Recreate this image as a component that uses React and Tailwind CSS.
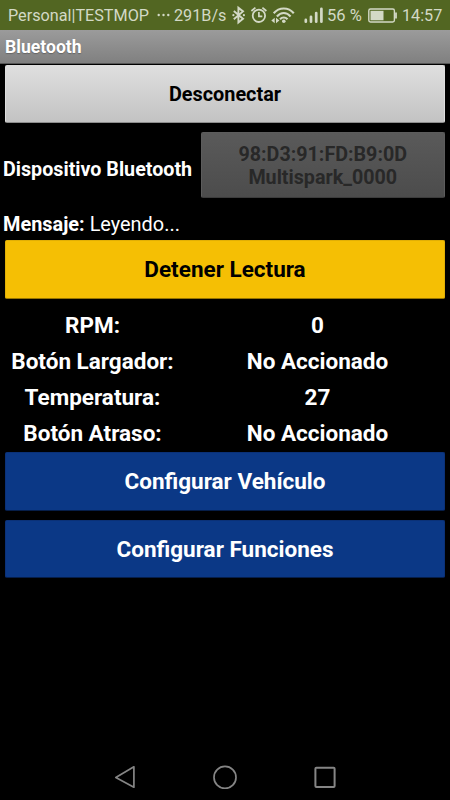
const READINGS = [
  ['RPM:', '0'],
  ['Botón Largador:', 'No Accionado'],
  ['Temperatura:', '27'],
  ['Botón Atraso:', 'No Accionado'],
];

function StatusBar() {
  return (
    <header className="flex h-[30px] items-center bg-[#526622] pl-2 text-[16.2px] leading-[30px] whitespace-nowrap text-[#d3d9c6]">
      <span className="w-[149px] shrink-0 pt-0.5">Personal|TESTMOP</span>
      <svg className="mr-[4px] h-[30px] w-[13px] shrink-0" viewBox="0 0 13 30" fill="currentColor">
        <circle cx="1.7" cy="15" r="1.2" />
        <circle cx="6.5" cy="15" r="1.2" />
        <circle cx="11.3" cy="15" r="1.2" />
      </svg>
      <span className="w-[57px] shrink-0 pt-0.5">291B/s</span>
      <svg className="h-[30px] w-[96px] shrink-0" viewBox="231 0 96 30" fill="none" stroke="currentColor">
        <path d="M233.8 11l9.2 7.8-4.6 3.7V7.8l4.6 3.6-9.2 7.8" strokeWidth="1.9" />
        <circle cx="233.4" cy="15.2" r="1.1" fill="currentColor" stroke="none" />
        <circle cx="243.9" cy="15.2" r="1.1" fill="currentColor" stroke="none" />
        <circle cx="258.9" cy="15.8" r="6.2" strokeWidth="1.8" />
        <path d="M251.4 11l4-3.4M266.4 11l-4-3.4M258.9 12v4.3h3.4" strokeWidth="1.7" />
        <path d="M273.7 13.3c5.4-6.4 14.7-6.4 20.1 0M276.9 16.5c4-4.6 9.7-4.6 13.7 0M280 19.3c2.2-2.4 5.3-2.4 7.5 0" strokeWidth="2.1" />
        <circle cx="283.8" cy="21.2" r="1.8" fill="currentColor" stroke="none" />
        <path d="M274.7 17.8v5.4l-3.4-2.7zM276 17.8v5.4l3.4-2.7z" fill="currentColor" stroke="none" />
        <path d="M305.8 19.9v1.8M311 16.8v4.9M316.2 13v8.7M321.4 8.8v12.9" strokeWidth="2.7" strokeLinecap="round" />
      </svg>
      <span className="w-[41px] shrink-0 pt-0.5 text-[16.5px]">56 %</span>
      <svg className="mr-[4px] h-[30px] w-[30px] shrink-0" viewBox="368 0 30 30" fill="none" stroke="currentColor">
        <rect x="368.8" y="9" width="25.6" height="13" rx="1.7" strokeWidth="1.4" />
        <path d="M370.5 10.8h13v9.5h-13z" fill="currentColor" stroke="none" />
        <path d="M396 12.5v6" strokeWidth="1.8" />
      </svg>
      <span className="pt-0.5 text-[16.2px]">14:57</span>
    </header>
  );
}

function ActionButton({ children, className }) {
  return (
    <button className={`block w-full rounded-[2px] border font-bold ${className}`}>
      {children}
    </button>
  );
}

export default function App() {
  return (
    <div className="flex h-[800px] w-[450px] flex-col overflow-hidden bg-black font-[Roboto,sans-serif] text-white">
      <StatusBar />
      <h1 className="h-[34px] shrink-0 border-b border-[#565656] bg-linear-to-b from-[#9b9b9b] to-[#808080] pl-[5px] text-[17.6px] leading-[35px] font-bold [text-shadow:0_1px_1px_#666]">
        Bluetooth
      </h1>

      <main className="flex flex-col px-[5px] pt-px">
        <ActionButton className="h-[58px] border-[#dedede] border-b-[#8d8d8d] bg-linear-to-b from-[#dfdfdf] to-[#c3c3c3] pt-[2px] text-[19.85px] text-black">
          Desconectar
        </ActionButton>

        <section className="mt-[9px] flex h-[66px] items-center justify-between">
          <h2 className="-ml-[2px] pt-[10px] text-[19.7px] font-bold whitespace-nowrap">Dispositivo Bluetooth</h2>
          <button disabled className="h-[66px] w-[244.5px] shrink-0 rounded-[2px] border border-[#5c5c5c] border-b-[#3c3c3c] bg-linear-to-b from-[#5a5a5a] to-[#4c4c4c] pt-[2px] text-[19.7px] leading-[23px] font-bold text-[#282828]">
            98:D3:91:FD:B9:0D<br />Multispark_0000
          </button>
        </section>

        <p className="mt-[10px] -ml-[2px] h-[32px] text-[19.9px] leading-[33px]"><b>Mensaje:</b> Leyendo...</p>

        <ActionButton className="h-[59px] border-[#e1af05] border-b-[#987500] bg-[#f5bf04] pt-px text-[22.5px] text-black">
          Detener Lectura
        </ActionButton>

        <dl className="mt-[8px] mb-px text-center text-[22.5px] leading-9 font-bold">
          {READINGS.map(([label, value]) => (
            <div key={label} className="flex h-9">
              <dt className="w-[175px] shrink-0">{label}</dt>
              <dd className="w-[275px] shrink-0">{value}</dd>
            </div>
          ))}
        </dl>

        <div className="flex flex-col gap-[9px]">
          <ActionButton className="h-[58.5px] border-[#0b3177] border-b-[#061e49] bg-[#0b3886] pt-[2px] text-[22.5px]">
            Configurar Vehículo
          </ActionButton>
          <ActionButton className="h-[58.5px] border-[#0b3177] border-b-[#061e49] bg-[#0b3886] pt-[2px] text-[22.5px]">
            Configurar Funciones
          </ActionButton>
        </div>
      </main>

      <nav className="mt-auto flex h-[35px] justify-center gap-[76px]">
        <svg className="size-6" viewBox="0 0 24 24" fill="none" stroke="#858585" strokeWidth="1.7" strokeLinejoin="round">
          <path d="M20.9 1.8v20.4L2.8 12.4z" />
        </svg>
        <svg className="size-6" viewBox="0 0 24 24" fill="none" stroke="#858585" strokeWidth="1.7">
          <circle cx="12" cy="12.4" r="11" />
        </svg>
        <svg className="size-6" viewBox="0 0 24 24" fill="none" stroke="#858585" strokeWidth="2">
          <rect x="2.4" y="2.8" width="19.2" height="19.2" rx="1" />
        </svg>
      </nav>
    </div>
  );
}
